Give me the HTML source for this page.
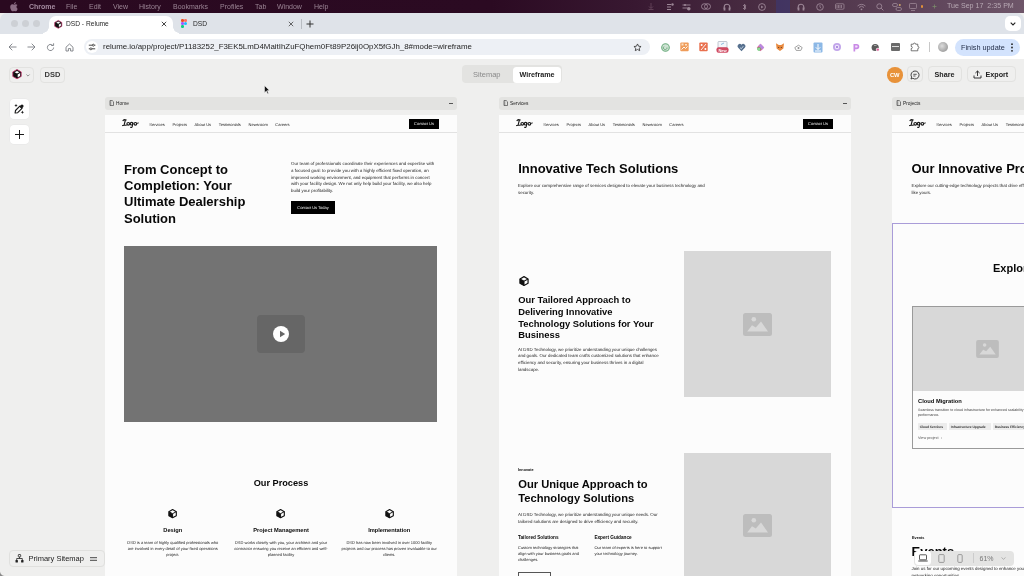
<!DOCTYPE html>
<html><head><meta charset="utf-8">
<style>
*{margin:0;padding:0;box-sizing:border-box}
html,body{width:1024px;height:576px;overflow:hidden;background:#efefee;will-change:transform;font-family:"Liberation Sans",sans-serif;color:#111}
.a{position:absolute}
svg{position:absolute;overflow:visible}
#menubar{left:0;top:0;width:1024px;height:13px;background:linear-gradient(90deg,#2a0920 0%,#2b0a22 48%,#381831 62%,#4e3348 78%,#5e445a 90%,#6e5669 100%)}
#menubar span{position:absolute;top:1px;font-size:7px;color:#9a8494;line-height:11px;white-space:nowrap}
#tabstrip{left:0;top:13px;width:1024px;height:22px;background:#dfe3e9;border-radius:7px 7px 0 0}
#toolbar{left:0;top:34px;width:1024px;height:25px;background:#fff}
#app{left:0;top:59px;width:1024px;height:517px;background:#efefee;overflow:hidden}
.tl{position:absolute;top:7px;width:7px;height:7px;border-radius:50%;background:#cdd0d5}
.tab{position:absolute;top:3px;height:19px;background:#fff;border-radius:7px 7px 0 0}
.tt{position:absolute;font-size:6.65px;color:#1f1f1f;white-space:nowrap;line-height:8px}
.ext{position:absolute;top:8px;width:9px;height:9px;border-radius:2px}
.btn{position:absolute;border:1px solid #e2e2e0;border-radius:4px;background:#efefee}
.wbtn{position:absolute;background:#fff;border-radius:4px;box-shadow:0 0 0 0.5px #e6e6e6}
.frame{position:absolute;top:39px;width:352px;height:600px}
.fh{position:absolute;left:0;top:-0.6px;width:352px;height:12.4px;background:#e3e3e1;border-radius:3px}
.fh span{position:absolute;left:11px;top:2.4px;font-size:4.8px;line-height:8px;color:#222}
.page{position:absolute;left:0;top:17px;width:352px;height:600px;background:#fcfcfc;overflow:hidden}
.nav{position:absolute;left:0;top:0;width:352px;height:17.8px;border-bottom:0.8px solid #e2e2e2}
.nl{position:absolute;top:7px;font-size:4px;line-height:5px;color:#222;white-space:nowrap;text-rendering:geometricPrecision}
.logo{position:absolute;top:4px;font-family:"Liberation Serif",serif;font-style:italic;font-weight:bold;font-size:8.2px;line-height:10px;color:#333;letter-spacing:-0.4px;transform:skewX(-8deg)}
.cbtn{position:absolute;background:#000;color:#f4f4f4;font-size:4px;line-height:10.5px;text-align:center;white-space:nowrap;text-rendering:geometricPrecision}
.h{position:absolute;font-weight:bold;color:#080808;white-space:nowrap}
.p{position:absolute;font-size:4.4px;line-height:6.6px;color:#1c1c1c;white-space:nowrap;text-rendering:geometricPrecision}
.img{position:absolute;background:#d8d8d8}
</style></head><body>
<!-- MENUBAR -->
<div id="menubar" class="a">
 <svg style="left:10px;top:2px" width="8" height="9" viewBox="0 0 16 18"><path fill="#8b6c84" d="M13 9.6c0-2.3 1.9-3.4 2-3.5-1.1-1.6-2.8-1.800-3.400-1.800-1.400-.1-2.800.9-3.500.9-.7 0-1.800-.8-3-.8C3.500 4.400 2 5.300 1.200 6.700-.5 9.600.8 14 2.400 16.300c.8 1.100 1.700 2.400 2.900 2.300 1.200 0 1.600-.7 3-.7s1.800.7 3 .7c1.300 0 2.100-1.200 2.800-2.300.9-1.300 1.300-2.600 1.300-2.600S13 12.300 13 9.600zM10.800 2.900C11.400 2.100 11.900 1 11.700 0c-.9 0-2 .6-2.700 1.400-.6.700-1.100 1.800-1 2.800 1.100.1 2.100-.5 2.800-1.300z"/></svg>
 <span style="left:29px;font-weight:bold;color:#a58ba0">Chrome</span>
 <span style="left:66px">File</span>
 <span style="left:89px">Edit</span>
 <span style="left:113px">View</span>
 <span style="left:139px">History</span>
 <span style="left:173px">Bookmarks</span>
 <span style="left:220px">Profiles</span>
 <span style="left:255px">Tab</span>
 <span style="left:277px">Window</span>
 <span style="left:314px">Help</span>
 <span style="left:947px;color:#b7a8b3;font-size:7.1px">Tue Sep 17&nbsp; 2:35 PM</span>
</div>
<div id="menuicons" class="a" style="left:0;top:0;width:1024px;height:13px">
<svg style="left:648px;top:3px" width="6" height="7" viewBox="0 0 6 7"><path d="M3 0v5M1 3.5 3 5.5 5 3.5M.5 6.5h5" stroke="#6a4a60" stroke-width=".8" fill="none"/></svg>
<svg style="left:666px;top:2.5px" width="8" height="8" viewBox="0 0 8 8"><path d="M1 1.5h4M1 4h4M1 6.5h4" stroke="#9c8696" stroke-width="1"/><circle cx="6.5" cy="1.5" r="1.2" fill="#9c8696"/></svg>
<svg style="left:682px;top:2.5px" width="9" height="8" viewBox="0 0 9 8"><path d="M.5 2h8M.5 5h5" stroke="#9c8696" stroke-width=".9"/><circle cx="3" cy="2" r="1" fill="#9c8696"/><circle cx="6.8" cy="5.8" r="1.8" fill="#9c8696"/></svg>
<svg style="left:701px;top:3px" width="10" height="7" viewBox="0 0 10 7"><ellipse cx="3.5" cy="3.5" rx="3" ry="2.8" fill="none" stroke="#9c8696" stroke-width=".9"/><ellipse cx="6.5" cy="3.5" rx="3" ry="2.8" fill="none" stroke="#9c8696" stroke-width=".9"/></svg>
<svg style="left:723px;top:2.5px" width="8" height="8" viewBox="0 0 8 8"><path d="M1.2 6V4a2.8 2.8 0 0 1 5.6 0v2" stroke="#9c8696" stroke-width="1.1" fill="none"/><rect x=".6" y="4.5" width="1.8" height="3" fill="#9c8696"/><rect x="5.6" y="4.5" width="1.8" height="3" fill="#9c8696"/></svg>
<svg style="left:742px;top:2.5px" width="5" height="8" viewBox="0 0 5 8"><path d="M1 2 4 5 2.5 6.8V1.2L4 3 1 6" stroke="#9c8696" stroke-width=".8" fill="none"/></svg>
<svg style="left:757.5px;top:2.5px" width="8" height="8" viewBox="0 0 8 8"><circle cx="4" cy="4" r="3.4" fill="none" stroke="#9c8696" stroke-width=".9"/><path d="M3.1 2.5v3L5.5 4z" fill="#9c8696"/></svg>
<div class="a" style="left:776px;top:0;width:14px;height:13px;background:#3a3878;opacity:.55"></div>
<svg style="left:797px;top:2.5px" width="8" height="8" viewBox="0 0 8 8"><path d="M1.2 6V4a2.8 2.8 0 0 1 5.6 0v2" stroke="#9c8696" stroke-width="1.1" fill="none"/><rect x=".6" y="4.5" width="1.8" height="3" fill="#9c8696"/><rect x="5.6" y="4.5" width="1.8" height="3" fill="#9c8696"/></svg>
<svg style="left:816px;top:2.5px" width="8" height="8" viewBox="0 0 8 8"><circle cx="4" cy="4" r="3.3" fill="none" stroke="#9c8696" stroke-width=".9"/><path d="M4 2v2.2l1.3 1" stroke="#9c8696" stroke-width=".8" fill="none"/></svg>
<svg style="left:835px;top:3px" width="10" height="7" viewBox="0 0 10 7"><rect x=".5" y=".8" width="8.5" height="5.4" rx="1" fill="none" stroke="#9c8696" stroke-width=".8"/><path d="M2 2v3M3.5 2v3M5 2v3M6.5 2v3" stroke="#9c8696" stroke-width=".8"/></svg>
<svg style="left:856.5px;top:2.5px" width="9" height="8" viewBox="0 0 9 8"><path d="M.6 3a5.5 5.5 0 0 1 7.8 0M2 4.5a3.5 3.5 0 0 1 5 0" stroke="#9c8696" stroke-width=".9" fill="none"/><circle cx="4.5" cy="6.3" r=".9" fill="#9c8696"/></svg>
<svg style="left:876px;top:2.5px" width="8" height="8" viewBox="0 0 8 8"><circle cx="3.3" cy="3.3" r="2.5" fill="none" stroke="#9c8696" stroke-width=".9"/><path d="M5.2 5.2 7.4 7.4" stroke="#9c8696" stroke-width="1"/></svg>
<svg style="left:892px;top:2.5px" width="10" height="8" viewBox="0 0 10 8"><rect x=".5" y=".5" width="5" height="3" rx="1.5" fill="none" stroke="#9c8696" stroke-width=".8"/><rect x="4" y="4.5" width="5.5" height="3" rx="1.5" fill="none" stroke="#9c8696" stroke-width=".8"/><circle cx="7.8" cy="2" r="1" fill="#c9a56a"/></svg>
<svg style="left:909px;top:2.5px" width="8" height="8" viewBox="0 0 8 8"><rect x=".5" y=".5" width="7" height="5" rx=".8" fill="none" stroke="#9c8696" stroke-width=".8"/><path d="M2 7.5h4" stroke="#9c8696" stroke-width=".8"/></svg>
<div class="a" style="left:921px;top:5px;width:2px;height:2.5px;background:#e0903a;border-radius:1px"></div>
<svg style="left:932px;top:4px" width="5" height="5" viewBox="0 0 5 5"><path d="M.5 2.5h4M2.5 .5v4" stroke="#7a8a6a" stroke-width=".8"/></svg>
</div>

<!-- TAB STRIP -->
<div id="tabstrip" class="a">
 <div class="tl" style="left:10.5px"></div>
 <div class="tl" style="left:21.5px"></div>
 <div class="tl" style="left:32.5px"></div>
 <div class="tab" style="left:49px;width:124px"></div><div class="a" style="left:43px;top:14px;width:6px;height:8px;background:radial-gradient(circle at 0 0,#dfe3e9 5.5px,#fff 6px)"></div><div class="a" style="left:173px;top:14px;width:6px;height:8px;background:radial-gradient(circle at 100% 0,#dfe3e9 5.5px,#fff 6px)"></div>
</div>
<!-- tabs content (body coords) -->
<svg style="left:53.5px;top:19.5px" width="8.5" height="8.5" viewBox="0 0 10 10"><path d="M5 .5 9.2 2.9V7.4L5 9.8.8 7.4V2.9z" fill="#111" stroke="#c4306a" stroke-width=".8"/><path d="M5 1.9 7.4 3.2 5 4.5 2.6 3.2z" fill="#fff"/><path d="M5.7 5.4 8.1 4v2.9L5.7 8.3z" fill="#fff"/></svg>
<div class="tt a" style="left:66px;top:20px">DSD - Relume</div>
<svg style="left:161px;top:21px" width="6" height="6" viewBox="0 0 6 6"><path d="M.8.8l4.4 4.4M5.2.8.8 5.2" stroke="#333" stroke-width=".9"/></svg>
<svg style="left:180px;top:19px" width="8" height="10" viewBox="0 0 8 10"><rect x="1" y="0" width="3" height="3" rx="1.2" fill="#f24e1e"/><rect x="4" y="0" width="3" height="3" rx="1.2" fill="#ff7262"/><rect x="1" y="3" width="3" height="3" rx="1.2" fill="#a259ff"/><circle cx="5.5" cy="4.5" r="1.5" fill="#1abcfe"/><rect x="1" y="6" width="3" height="3" rx="1.2" fill="#0acf83"/></svg>
<div class="tt a" style="left:193px;top:20px">DSD</div>
<svg style="left:288px;top:21px" width="6" height="6" viewBox="0 0 6 6"><path d="M.8.8l4.4 4.4M5.2.8.8 5.2" stroke="#444" stroke-width=".8"/></svg>
<div class="a" style="left:301px;top:19px;width:1px;height:10px;background:#b8bcc2"></div>
<svg style="left:306px;top:20px" width="8" height="8" viewBox="0 0 8 8"><path d="M4 .5v7M.5 4h7" stroke="#333" stroke-width="1"/></svg>
<div class="a" style="left:1005px;top:16px;width:16px;height:15px;background:#fff;border-radius:5px"></div>
<svg style="left:1010px;top:22px" width="6" height="4" viewBox="0 0 6 4"><path d="M.7.7 3 3 5.3.7" stroke="#222" stroke-width="1.1" fill="none"/></svg>

<div id="toolbar" class="a">
 <svg style="left:8px;top:9px" width="9" height="8" viewBox="0 0 9 8"><path d="M8.5 4H1M4.3.7 1 4l3.3 3.3" stroke="#7b7e83" stroke-width=".9" fill="none"/></svg>
 <svg style="left:27px;top:9px" width="9" height="8" viewBox="0 0 9 8"><path d="M.5 4H8M4.7.7 8 4 4.7 7.3" stroke="#7b7e83" stroke-width=".9" fill="none"/></svg>
 <svg style="left:46px;top:8.5px" width="9" height="9" viewBox="0 0 9 9"><path d="M7.6 4.5A3.1 3.1 0 1 1 6.6 2.2" stroke="#7b7e83" stroke-width=".9" fill="none"/><path d="M5.2 1.6h2.4V-.6" stroke="#7b7e83" stroke-width=".9" fill="none" transform="translate(0 .9)"/></svg>
 <svg style="left:65px;top:8.5px" width="9" height="9" viewBox="0 0 9 9"><path d="M1 4.2 4.5 1 8 4.2V8H5.6V5.6H3.4V8H1z" stroke="#7b7e83" stroke-width=".9" fill="none" stroke-linejoin="round"/></svg>
 <div class="a" style="left:84px;top:4.5px;width:566px;height:16.5px;background:#edf0f5;border-radius:8.5px"></div>
 <div class="a" style="left:85.5px;top:6.5px;width:12.5px;height:12.5px;background:#fff;border-radius:50%"></div>
 <svg style="left:87.5px;top:9px" width="8" height="8" viewBox="0 0 8 8"><path d="M.8 2.2h3.4M6.4 2.2h1M.8 5.8h1M4 5.8h3.2" stroke="#333" stroke-width=".9"/><circle cx="5.3" cy="2.2" r="1" fill="none" stroke="#333" stroke-width=".8"/><circle cx="2.9" cy="5.8" r="1" fill="none" stroke="#333" stroke-width=".8"/></svg>
 <div class="a" style="left:103px;top:8px;font-size:7.9px;line-height:10px;color:#1f1f1f;white-space:nowrap">relume.io/app/project/P1183252_F3EK5LmD4MaitIhZuFQhem0Ft89P26ij0OpX5fGJh_8#mode=wireframe</div>
 <svg style="left:633px;top:8.5px" width="9" height="9" viewBox="0 0 24 24"><path d="M12 2.5l2.9 6.1 6.6.8-4.9 4.5 1.3 6.6L12 17.2l-5.9 3.3 1.3-6.6-4.9-4.5 6.6-.8z" fill="none" stroke="#333" stroke-width="2.2" stroke-linejoin="round"/></svg>
 <!-- extensions -->
 <svg style="left:660.5px;top:8.5px" width="9" height="9" viewBox="0 0 9 9"><circle cx="4.5" cy="4.5" r="3.8" fill="#cfe3d4" stroke="#6fae80" stroke-width="1.1"/><path d="M3 3.5a1.8 1.8 0 1 0 3 1" fill="none" stroke="#5a9a6a" stroke-width=".8"/></svg>
 <svg style="left:679.5px;top:8px" width="9" height="10" viewBox="0 0 9 10"><rect x=".3" y=".5" width="8.4" height="8.8" rx="1" fill="#ef9c5a"/><rect x="1.5" y="1.5" width="2" height="2" fill="#fbe3c8"/><rect x="5" y="2" width="2" height="1.5" fill="#fbe3c8"/><path d="M1.5 7.5 4 5l1.5 1.5L7.5 4.5" stroke="#fff" stroke-width=".9" fill="none"/></svg>
 <svg style="left:698.5px;top:8px" width="9" height="10" viewBox="0 0 9 10"><rect x=".3" y=".5" width="8.4" height="8.8" rx="1" fill="#e9704e"/><path d="M2 8 7 2" stroke="#fff" stroke-width=".9"/><circle cx="2.6" cy="3" r="1" fill="#fff"/><circle cx="6.4" cy="7" r="1" fill="#fff"/></svg>
 <svg style="left:716px;top:6.5px" width="13" height="13" viewBox="0 0 13 13"><rect x="2" y=".5" width="9" height="6.5" rx=".8" fill="#f4f6fa" stroke="#9aa4b4" stroke-width=".6"/><path d="M5 3.5 8 2" stroke="#5aa0d0" stroke-width=".7"/><rect x=".5" y="6.2" width="12" height="5.6" rx="2" fill="#d04a62"/><text x="6.5" y="10.5" font-size="4" text-anchor="middle" fill="#fff" font-family="Liberation Sans" font-weight="bold">New</text></svg>
 <svg style="left:736.5px;top:8.5px" width="9" height="9" viewBox="0 0 9 9"><path d="M4.5 8.2 1 4.6A2.1 2.1 0 0 1 4.5 1.8 2.1 2.1 0 0 1 8 4.6z" fill="#56708e"/><path d="M3 4.6 4.3 5.8 6.3 3.2" stroke="#d8e4f0" stroke-width=".8" fill="none"/></svg>
 <svg style="left:755.5px;top:8.5px" width="9" height="9" viewBox="0 0 9 9"><path d="M4.5.8 8.2 4.5 4.5 8.2.8 4.5z" fill="#e06aa0"/><path d="M4.5.8 8.2 4.5 6.3 6.4 2.6 2.7z" fill="#b88ae0"/><circle cx="3" cy="6" r="1.8" fill="#4fc25a"/><circle cx="3" cy="6" r=".7" fill="#fff"/></svg>
 <svg style="left:774.5px;top:8px" width="10" height="10" viewBox="0 0 10 10"><path d="M1 1.2 3.8 3h2.4L9 1.2 8.4 6.4 5 9 1.6 6.4z" fill="#e8893e"/><path d="M3 5.5h1.2M5.8 5.5H7" stroke="#5a3a20" stroke-width=".8"/></svg>
 <svg style="left:793.5px;top:8.5px" width="9" height="9" viewBox="0 0 9 9"><path d="M.8 4.6 4.5 2.2 8.2 4.6 6.8 7.4H2.2z" fill="none" stroke="#8a8a8a" stroke-width=".8"/><circle cx="4.5" cy="5" r="1" fill="#8a8a8a"/></svg>
 <svg style="left:813px;top:7.5px" width="10" height="11" viewBox="0 0 10 11"><rect x=".5" y=".5" width="9" height="10" rx="1" fill="#8cb8e6"/><path d="M5 2v5.5M2.8 5.3 5 7.5l2.2-2.2" stroke="#fff" stroke-width="1" fill="none"/><rect x="2" y="8.5" width="6" height="1" fill="#fff"/></svg>
 <svg style="left:832px;top:8px" width="10" height="10" viewBox="0 0 10 10"><circle cx="5" cy="5" r="4" fill="#c2a6ea"/><circle cx="5" cy="5" r="2.2" fill="#efe6fb"/><circle cx="5" cy="5" r="1" fill="#9a70d8"/></svg>
 <svg style="left:851.5px;top:8.5px" width="9" height="9" viewBox="0 0 9 9"><path d="M1.5 1h3.2a2.6 2.6 0 0 1 0 5.2H3.2v2.3H1.5z" fill="#c98ae6"/><path d="M3.2 2.6h1.4a1 1 0 0 1 0 2H3.2z" fill="#f3e4fa"/></svg>
 <svg style="left:871px;top:8.5px" width="10" height="9" viewBox="0 0 10 9"><circle cx="4.2" cy="4.5" r="3.6" fill="#5a5a5a"/><path d="M3 2.5h2.5" stroke="#ddd" stroke-width=".6"/><circle cx="6.8" cy="6.6" r="1.9" fill="#f5f5f5"/><circle cx="6.8" cy="6.6" r="1.2" fill="#e35a9a"/></svg>
 <div class="ext" style="left:890.5px;top:8.5px;width:9.5px;height:8.5px;background:#6a6a6a;border-radius:1px"></div>
 <div class="a" style="left:892px;top:12px;width:6.5px;height:1.2px;background:#ddd"></div>
 <svg style="left:909.5px;top:8px" width="10" height="10" viewBox="0 0 10 10"><path d="M1.2 2.2h2.2a1.1 1.1 0 0 1 2.2 0h2.2v2.2a1.1 1.1 0 0 1 0 2.2v2.2H1.2V6.6a1.1 1.1 0 0 0 0-2.2z" fill="none" stroke="#555" stroke-width=".8" stroke-linejoin="round"/></svg>
 <div class="a" style="left:929px;top:8px;width:0.8px;height:10px;background:#c8c8c8"></div>
 <div class="a" style="left:938px;top:7.5px;width:10px;height:10px;border-radius:50%;background:radial-gradient(circle at 40% 40%,#ddd,#888)"></div>
 <div class="a" style="left:955px;top:4.5px;width:65px;height:17px;background:#d3e3fd;border-radius:8.5px"></div>
 <div class="a" style="left:961px;top:8.5px;font-size:7.3px;line-height:9px;color:#1f2a44;white-space:nowrap">Finish update</div>
 <svg style="left:1011px;top:8.5px" width="2" height="9" viewBox="0 0 2 9"><circle cx="1" cy="1.2" r=".9" fill="#222"/><circle cx="1" cy="4.5" r=".9" fill="#222"/><circle cx="1" cy="7.8" r=".9" fill="#222"/></svg>
</div>
<div id="app" class="a">
 <!-- top-left buttons (app coords: y-59) -->
 <div class="btn" style="left:9px;top:7.5px;width:25px;height:16px"></div>
 <svg style="left:11.8px;top:10.2px" width="10" height="10" viewBox="0 0 10 10"><path d="M5 .5 9.2 2.9V7.4L5 9.8.8 7.4V2.9z" fill="#111" stroke="#c4306a" stroke-width=".8"/><path d="M5 1.9 7.4 3.2 5 4.5 2.6 3.2z" fill="#fff"/><path d="M5.7 5.4 8.1 4v2.9L5.7 8.3z" fill="#fff"/></svg>
 <svg style="left:26.2px;top:14.6px" width="4" height="3" viewBox="0 0 4 3"><path d="M.4.5 2 2.1 3.6.5" stroke="#777" stroke-width=".8" fill="none"/></svg>
 <div class="btn" style="left:40px;top:7.5px;width:25px;height:16px"></div>
 <div class="a" style="left:40px;top:11px;width:25px;text-align:center;font-size:7.5px;line-height:9px;color:#3a3a3a;font-weight:bold">DSD</div>
 <!-- left tools -->
 <div class="wbtn" style="left:9.5px;top:40px;width:19.5px;height:20px"></div>
 <svg style="left:14px;top:44.6px" width="10" height="10" viewBox="0 0 10 10"><path d="M1.1 9 1.5 6.5 5.8 2.2 8 4.4 3.7 8.7z" fill="none" stroke="#1a1a1a" stroke-width="1.15" stroke-linejoin="round"/><path d="M5.5 2.5 6.9 1.1a1.55 1.55 0 0 1 2.2 2.2L7.7 4.7z" fill="#1a1a1a"/><path d="M2 -.2 2.5 1 3.7 1.5 2.5 2 2 3.2 1.5 2 .3 1.5 1.5 1z" fill="#1a1a1a"/><path d="M8.4 6.6 8.9 7.8 10.1 8.3 8.9 8.8 8.4 10 7.9 8.8 6.7 8.3 7.9 7.8z" fill="#1a1a1a"/></svg>
 <div class="wbtn" style="left:9.5px;top:65.5px;width:19.5px;height:19.5px"></div>
 <svg style="left:14.5px;top:70.9px" width="9" height="9" viewBox="0 0 9 9"><path d="M4.5 0v9M0 4.5h9" stroke="#1a1a1a" stroke-width="1"/></svg>
 <!-- segmented -->
 <div class="a" style="left:461.5px;top:6.3px;width:100.5px;height:18.2px;background:#e3e3e1;border-radius:4px"></div>
 <div class="a" style="left:512.8px;top:7.5px;width:48px;height:16px;background:#fff;border-radius:3.5px"></div>
 <div class="a" style="left:473px;top:11px;font-size:7.5px;line-height:9px;color:#8a8a8a;white-space:nowrap">Sitemap</div>
 <div class="a" style="left:519.5px;top:11px;font-size:7.2px;line-height:9px;color:#222;font-weight:bold;white-space:nowrap">Wireframe</div>
 <!-- right -->
 <div class="a" style="left:887px;top:8px;width:15.5px;height:15.5px;border-radius:50%;background:#e8923a"></div>
 <div class="a" style="left:887px;top:12px;width:15.5px;text-align:center;font-size:5.8px;line-height:8px;color:#fff;font-weight:bold">CW</div>
 <div class="btn" style="left:906.5px;top:7.3px;width:16px;height:16.2px"></div>
 <svg style="left:909.5px;top:10.5px" width="10" height="10" viewBox="0 0 10 10"><path d="M5 1a4 4 0 1 1-2.2 7.3L1 9l.6-1.9A4 4 0 0 1 5 1z" fill="none" stroke="#333" stroke-width=".9" stroke-linejoin="round"/><path d="M3.3 4.3h3.4M3.3 6h2.2" stroke="#333" stroke-width=".8"/></svg>
 <div class="btn" style="left:927.5px;top:7.3px;width:34px;height:16.2px"></div>
 <div class="a" style="left:927.5px;top:11px;width:34px;text-align:center;font-size:7.2px;line-height:9px;color:#222;font-weight:bold">Share</div>
 <div class="btn" style="left:966.5px;top:7.3px;width:49px;height:16.2px"></div>
 <svg style="left:972.5px;top:11px" width="9" height="9" viewBox="0 0 9 9"><path d="M4.5 6V1M2.4 3 4.5 1 6.6 3M1 5.5v2.5h7V5.5" stroke="#222" stroke-width=".9" fill="none"/></svg>
 <div class="a" style="left:985.5px;top:11px;font-size:7.2px;line-height:9px;color:#222;font-weight:bold;white-space:nowrap">Export</div>
 <!-- cursor -->
 <svg style="left:264px;top:26px" width="6" height="9" viewBox="0 0 6 9"><path d="M.5.5v7.2l1.8-1.6 1.2 2.6 1-.5L3.3 5.6h2.2z" fill="#111" stroke="#fff" stroke-width=".5"/></svg>
</div>
<!-- FRAMES -->
<div class="frame" style="left:105px;top:98px">
<div class="fh"><svg style="left:4px;top:3px" width="5" height="6" viewBox="0 0 5 6"><path d="M1 .5h2.2L4.5 1.8v3.7H1z" fill="none" stroke="#333" stroke-width=".6"/><path d="M1.8 1.2v4" stroke="#333" stroke-width=".4"/></svg><span>Home</span><div class="a" style="left:343.5px;top:5.4px;width:4.5px;height:0.7px;background:#555"></div></div>
<div class="page">
<div class="nav"><svg style="left:17px;top:4.2px" width="17" height="9" viewBox="0 0 17 9"><path d="M1 1.6C1.8.6 3.2.4 4.2 1M3.4 1 2 6.3M.6 6.6C1.8 6 3.2 6.4 4.6 6" fill="none" stroke="#1a1a1a" stroke-width="1.15" stroke-linecap="round"/><circle cx="6.3" cy="4.8" r="1.35" fill="none" stroke="#1a1a1a" stroke-width="1.1"/><circle cx="9.6" cy="4.7" r="1.3" fill="none" stroke="#1a1a1a" stroke-width="1.1"/><path d="M10.9 4 10.2 7.6C10 8.6 9.2 8.7 8.6 8.3" fill="none" stroke="#1a1a1a" stroke-width="1.05" stroke-linecap="round"/><circle cx="13.4" cy="4.8" r="1.35" fill="none" stroke="#1a1a1a" stroke-width="1.1"/><path d="M14.8 4.4 16.4 4" fill="none" stroke="#1a1a1a" stroke-width=".9" stroke-linecap="round"/></svg><div class="nl" style="left:44.3px">Services</div><div class="nl" style="left:67.5px">Projects</div><div class="nl" style="left:89.6px">About Us</div><div class="nl" style="left:113.7px">Testimonials</div><div class="nl" style="left:143.6px">Newsroom</div><div class="nl" style="left:170.3px">Careers</div><div class="cbtn" style="left:304px;top:3.6px;width:30px;height:10.4px">Contact Us</div></div>
<div class="h" style="left:19px;top:46.6px;font-size:13px;line-height:16.35px">From Concept to<br>Completion: Your<br>Ultimate Dealership<br>Solution</div>
<div class="p" style="left:186px;top:46.4px">Our team of professionals coordinate their experiences and expertise with<br>a focused goal: to provide you with a highly efficient fixed operation, an<br>improved working environment, and equipment that performs in concert<br>with your facility design. We not only help build your facility, we also help<br>build your profitability.</div>
<div class="cbtn" style="left:186px;top:86px;width:44px;height:12.6px;line-height:14.6px;overflow:hidden">Contact Us Today</div>
<div class="a" style="left:19.3px;top:131px;width:313px;height:175.8px;background:#737373"></div>
<div class="a" style="left:151.7px;top:199.6px;width:48.3px;height:38px;background:#666;border-radius:4px"></div>
<div class="a" style="left:168px;top:210.5px;width:16.4px;height:16.4px;background:#fff;border-radius:50%"></div>
<svg style="left:173.5px;top:214.5px" width="7" height="8" viewBox="0 0 7 8"><path d="M1 .8 6.2 4 1 7.2z" fill="#666"/></svg>
<div class="h" style="left:0;width:352px;text-align:center;top:363.2px;font-size:9.2px;line-height:11px">Our Process</div>
<svg style="left:63.199999999999996px;top:394.4px" width="9.2" height="9.2" viewBox="0 0 10 10.6"><path d="M5 .7 9.3 3.1v4.6L5 10.0.7 7.7V3.1z" fill="#fff" stroke="#111" stroke-width="1.3" stroke-linejoin="round"/><path d=".7 3.1" /><path d="M.7 3.1 5 5.4v4.6L.7 7.7z" fill="#111"/><path d="M.7 3.1 5 5.4 9.3 3.1M5 5.4v4.6" stroke="#111" stroke-width="1.1" fill="none"/></svg><div class="h" style="left:17.799999999999997px;width:100px;text-align:center;top:411.7px;font-size:5.7px;line-height:7px">Design</div><div class="p" style="left:17.799999999999997px;width:100px;text-align:center;top:425px;font-size:4px;line-height:6px">DSD is a team of highly qualified professionals who<br>are involved in every detail of your fixed operations<br>project.</div><svg style="left:171.4px;top:394.4px" width="9.2" height="9.2" viewBox="0 0 10 10.6"><path d="M5 .7 9.3 3.1v4.6L5 10.0.7 7.7V3.1z" fill="#fff" stroke="#111" stroke-width="1.3" stroke-linejoin="round"/><path d=".7 3.1" /><path d="M.7 3.1 5 5.4v4.6L.7 7.7z" fill="#111"/><path d="M.7 3.1 5 5.4 9.3 3.1M5 5.4v4.6" stroke="#111" stroke-width="1.1" fill="none"/></svg><div class="h" style="left:126px;width:100px;text-align:center;top:411.7px;font-size:5.7px;line-height:7px">Project Management</div><div class="p" style="left:126px;width:100px;text-align:center;top:425px;font-size:4px;line-height:6px">DSD works closely with you, your architect and your<br>contractor ensuring you receive an efficient and well-<br>planned facility</div><svg style="left:279.59999999999997px;top:394.4px" width="9.2" height="9.2" viewBox="0 0 10 10.6"><path d="M5 .7 9.3 3.1v4.6L5 10.0.7 7.7V3.1z" fill="#fff" stroke="#111" stroke-width="1.3" stroke-linejoin="round"/><path d=".7 3.1" /><path d="M.7 3.1 5 5.4v4.6L.7 7.7z" fill="#111"/><path d="M.7 3.1 5 5.4 9.3 3.1M5 5.4v4.6" stroke="#111" stroke-width="1.1" fill="none"/></svg><div class="h" style="left:234.2px;width:100px;text-align:center;top:411.7px;font-size:5.7px;line-height:7px">Implementation</div><div class="p" style="left:234.2px;width:100px;text-align:center;top:425px;font-size:4px;line-height:6px">DSD has now been involved in over 1000 facility<br>projects and our process has proven invaluable to our<br>clients.</div></div></div><div class="frame" style="left:499px;top:98px">
<div class="fh"><svg style="left:4px;top:3px" width="5" height="6" viewBox="0 0 5 6"><path d="M1 .5h2.2L4.5 1.8v3.7H1z" fill="none" stroke="#333" stroke-width=".6"/><path d="M1.8 1.2v4" stroke="#333" stroke-width=".4"/></svg><span>Services</span><div class="a" style="left:343.5px;top:5.4px;width:4.5px;height:0.7px;background:#555"></div></div>
<div class="page">
<div class="nav"><svg style="left:17px;top:4.2px" width="17" height="9" viewBox="0 0 17 9"><path d="M1 1.6C1.8.6 3.2.4 4.2 1M3.4 1 2 6.3M.6 6.6C1.8 6 3.2 6.4 4.6 6" fill="none" stroke="#1a1a1a" stroke-width="1.15" stroke-linecap="round"/><circle cx="6.3" cy="4.8" r="1.35" fill="none" stroke="#1a1a1a" stroke-width="1.1"/><circle cx="9.6" cy="4.7" r="1.3" fill="none" stroke="#1a1a1a" stroke-width="1.1"/><path d="M10.9 4 10.2 7.6C10 8.6 9.2 8.7 8.6 8.3" fill="none" stroke="#1a1a1a" stroke-width="1.05" stroke-linecap="round"/><circle cx="13.4" cy="4.8" r="1.35" fill="none" stroke="#1a1a1a" stroke-width="1.1"/><path d="M14.8 4.4 16.4 4" fill="none" stroke="#1a1a1a" stroke-width=".9" stroke-linecap="round"/></svg><div class="nl" style="left:44.3px">Services</div><div class="nl" style="left:67.5px">Projects</div><div class="nl" style="left:89.6px">About Us</div><div class="nl" style="left:113.7px">Testimonials</div><div class="nl" style="left:143.6px">Newsroom</div><div class="nl" style="left:170.3px">Careers</div><div class="cbtn" style="left:304px;top:3.6px;width:30px;height:10.4px">Contact Us</div></div>
<div class="h" style="left:19.2px;top:46.4px;font-size:13px;line-height:16.1px">Innovative Tech Solutions</div>
<div class="p" style="left:19px;top:68.3px">Explore our comprehensive range of services designed to elevate your business technology and<br>security.</div>
<svg style="left:20px;top:161px" width="10" height="10" viewBox="0 0 10 10.6"><path d="M5 .7 9.3 3.1v4.6L5 10.0.7 7.7V3.1z" fill="#fff" stroke="#111" stroke-width="1.3" stroke-linejoin="round"/><path d=".7 3.1" /><path d="M.7 3.1 5 5.4v4.6L.7 7.7z" fill="#111"/><path d="M.7 3.1 5 5.4 9.3 3.1M5 5.4v4.6" stroke="#111" stroke-width="1.1" fill="none"/></svg>
<div class="h" style="left:19.2px;top:179px;font-size:9.4px;line-height:11.8px">Our Tailored Approach to<br>Delivering Innovative<br>Technology Solutions for Your<br>Business</div>
<div class="p" style="left:19px;top:231.5px;line-height:6.7px">At DSD Technology, we prioritize understanding your unique challenges<br>and goals. Our dedicated team crafts customized solutions that enhance<br>efficiency and security, ensuring your business thrives in a digital<br>landscape.</div>
<div class="img" style="left:185.4px;top:135.8px;width:146.3px;height:146.4px"></div>
<svg style="left:244px;top:197.5px" width="29" height="23" viewBox="0 0 29 23"><rect x="0" y="0" width="29" height="23" rx="2.5" fill="#bdbdbd"/><circle cx="10.8" cy="6.3" r="2.3" fill="#d8d8d8"/><path d="M4.2 18.4 9 12.3 12.8 14.4 18 8.6 25 18.4z" fill="#d8d8d8"/></svg>
<div class="h" style="left:19px;top:353.3px;font-size:3.8px;line-height:5px">Innovate</div>
<div class="h" style="left:19.2px;top:362.8px;font-size:11.2px;line-height:13.8px">Our Unique Approach to<br>Technology Solutions</div>
<div class="p" style="left:19px;top:397px">At DSD Technology, we prioritize understanding your unique needs. Our<br>tailored solutions are designed to drive efficiency and security.</div>
<div class="h" style="left:19px;top:420px;font-size:4.7px;line-height:6px">Tailored Solutions</div>
<div class="h" style="left:95.4px;top:420px;font-size:4.7px;line-height:6px">Expert Guidance</div>
<div class="p" style="left:19px;top:430px;font-size:4px;line-height:5.8px">Custom technology strategies that<br>align with your business goals and<br>challenges.</div>
<div class="p" style="left:95.4px;top:430px;font-size:4px;line-height:5.8px">Our team of experts is here to support<br>your technology journey.</div>
<div class="a" style="left:19px;top:456.6px;width:32.5px;height:12px;border:0.7px solid #555"></div>
<div class="img" style="left:185.4px;top:337.5px;width:146.3px;height:146.4px"></div>
<svg style="left:244px;top:399px" width="29" height="23" viewBox="0 0 29 23"><rect x="0" y="0" width="29" height="23" rx="2.5" fill="#bdbdbd"/><circle cx="10.8" cy="6.3" r="2.3" fill="#d8d8d8"/><path d="M4.2 18.4 9 12.3 12.8 14.4 18 8.6 25 18.4z" fill="#d8d8d8"/></svg>
</div></div><div class="frame" style="left:892px;top:98px">
<div class="fh"><svg style="left:4px;top:3px" width="5" height="6" viewBox="0 0 5 6"><path d="M1 .5h2.2L4.5 1.8v3.7H1z" fill="none" stroke="#333" stroke-width=".6"/><path d="M1.8 1.2v4" stroke="#333" stroke-width=".4"/></svg><span>Projects</span><div class="a" style="left:343.5px;top:5.4px;width:4.5px;height:0.7px;background:#555"></div></div>
<div class="page">
<div class="nav"><svg style="left:17px;top:4.2px" width="17" height="9" viewBox="0 0 17 9"><path d="M1 1.6C1.8.6 3.2.4 4.2 1M3.4 1 2 6.3M.6 6.6C1.8 6 3.2 6.4 4.6 6" fill="none" stroke="#1a1a1a" stroke-width="1.15" stroke-linecap="round"/><circle cx="6.3" cy="4.8" r="1.35" fill="none" stroke="#1a1a1a" stroke-width="1.1"/><circle cx="9.6" cy="4.7" r="1.3" fill="none" stroke="#1a1a1a" stroke-width="1.1"/><path d="M10.9 4 10.2 7.6C10 8.6 9.2 8.7 8.6 8.3" fill="none" stroke="#1a1a1a" stroke-width="1.05" stroke-linecap="round"/><circle cx="13.4" cy="4.8" r="1.35" fill="none" stroke="#1a1a1a" stroke-width="1.1"/><path d="M14.8 4.4 16.4 4" fill="none" stroke="#1a1a1a" stroke-width=".9" stroke-linecap="round"/></svg><div class="nl" style="left:44.3px">Services</div><div class="nl" style="left:67.5px">Projects</div><div class="nl" style="left:89.6px">About Us</div><div class="nl" style="left:113.7px">Testimonials</div><div class="nl" style="left:143.6px">Newsroom</div><div class="nl" style="left:170.3px">Careers</div><div class="cbtn" style="left:304px;top:3.6px;width:30px;height:10.4px">Contact Us</div></div>
<div class="h" style="left:19.5px;top:46.4px;font-size:13px;line-height:16.1px">Our Innovative Projects</div>
<div class="p" style="left:19.5px;top:68.3px">Explore our cutting-edge technology projects that drive efficiency and security for businesses<br>like yours.</div>
<div class="a" style="left:0;top:107.5px;width:400px;height:285px;border:1px solid #a99cd8"></div>
<div class="h" style="left:101px;top:147px;font-size:11px;line-height:13px">Explore Our Projects</div>
<div class="a" style="left:20px;top:191px;width:200px;height:142.5px;border:0.7px solid #9a9a9a;background:#fcfcfc"></div>
<div class="img" style="left:20.5px;top:191.5px;width:200px;height:84px"></div>
<svg style="left:84px;top:224.5px" width="23" height="18" viewBox="0 0 29 23"><rect x="0" y="0" width="29" height="23" rx="2.5" fill="#bdbdbd"/><circle cx="10.8" cy="6.3" r="2.3" fill="#d8d8d8"/><path d="M4.2 18.4 9 12.3 12.8 14.4 18 8.6 25 18.4z" fill="#d8d8d8"/></svg>
<div class="h" style="left:26px;top:283px;font-size:5.75px;line-height:7px">Cloud Migration</div>
<div class="p" style="left:26px;top:292.5px;font-size:3.6px;line-height:5.9px;color:#444">Seamless transition to cloud infrastructure for enhanced scalability and<br>performance.</div>
<div class="a" style="left:26px;top:308.4px;width:28.5px;height:6.4px;background:#ececec;border-radius:.5px"></div>
<div class="a" style="left:57px;top:308.4px;width:41.5px;height:6.4px;background:#ececec;border-radius:.5px"></div>
<div class="a" style="left:101px;top:308.4px;width:45px;height:6.4px;background:#ececec;border-radius:.5px"></div>
<div class="p" style="left:27.8px;top:308.6px;font-size:3.3px;line-height:6px;color:#333;font-weight:bold;letter-spacing:-0.05px">Cloud Services</div>
<div class="p" style="left:58.8px;top:308.6px;font-size:3.3px;line-height:6px;color:#333;font-weight:bold;letter-spacing:-0.05px">Infrastructure Upgrade</div>
<div class="p" style="left:102.8px;top:308.6px;font-size:3.3px;line-height:6px;color:#333;font-weight:bold;letter-spacing:-0.05px">Business Efficiency</div>
<div class="p" style="left:26px;top:321px;font-size:3.8px;line-height:5px;color:#555">View project &nbsp;&#8250;</div>
<div class="h" style="left:20px;top:420.8px;font-size:3.8px;line-height:5px">Events</div>
<div class="h" style="left:19.5px;top:429px;font-size:13px;line-height:16px">Events</div>
<div class="p" style="left:19.5px;top:451px">Join us for our upcoming events designed to enhance your skills and<br>networking opportunities.</div>
</div></div>
<!-- /FRAMES -->
<!-- bottom UI -->
<div id="bottomui">
 <div class="a" style="left:0;top:571px;width:5px;height:5px;background:radial-gradient(circle at 100% 0,rgba(0,0,0,0) 4.5px,#8a8a8a 5.5px)"></div>
 <div class="a" style="left:8.6px;top:550.2px;width:96px;height:17.2px;background:#efefee;border:0.8px solid #e0e0de;border-radius:4px"></div>
 <svg style="left:15px;top:554px" width="9" height="9" viewBox="0 0 9 9"><rect x="3.3" y=".5" width="2.4" height="2.4" rx=".5" fill="none" stroke="#222" stroke-width=".8"/><rect x=".5" y="6" width="2.4" height="2.4" rx=".5" fill="#222"/><rect x="6.1" y="6" width="2.4" height="2.4" rx=".5" fill="#222"/><path d="M4.5 2.9v1.6M1.7 6V4.5h5.6V6" fill="none" stroke="#222" stroke-width=".8"/></svg>
 <div class="a" style="left:28.5px;top:554px;font-size:7.5px;line-height:9px;color:#222;white-space:nowrap">Primary Sitemap</div>
 <svg style="left:89.5px;top:556.5px" width="7" height="4" viewBox="0 0 7 4"><path d="M0 .7h7M0 3.3h7" stroke="#333" stroke-width=".9"/></svg>
 <!-- view controls -->
 <div class="a" style="left:914px;top:550.6px;width:100.4px;height:15.1px;background:#e4e4e3;border-radius:4px"></div>
 <div class="a" style="left:914.5px;top:551px;width:16.5px;height:14.3px;background:#fff;border-radius:3.5px"></div>
 <svg style="left:918px;top:554px" width="10" height="8" viewBox="0 0 10 8"><rect x="1.5" y=".8" width="7" height="5" rx=".6" fill="none" stroke="#333" stroke-width=".8"/><path d="M.3 7h9.4" stroke="#333" stroke-width=".9"/></svg>
 <svg style="left:937.5px;top:553.5px" width="7" height="9" viewBox="0 0 7 9"><rect x=".8" y=".6" width="5.4" height="7.8" rx=".8" fill="none" stroke="#888" stroke-width=".8"/></svg>
 <svg style="left:956.5px;top:553.5px" width="6" height="9" viewBox="0 0 6 9"><rect x=".8" y=".6" width="4.4" height="7.8" rx="1" fill="none" stroke="#888" stroke-width=".8"/></svg>
 <div class="a" style="left:972.5px;top:553px;width:0.6px;height:10px;background:#ccc"></div>
 <div class="a" style="left:979.5px;top:554px;font-size:7px;line-height:9px;color:#777;white-space:nowrap">61%</div>
 <svg style="left:1001px;top:557px" width="5" height="3" viewBox="0 0 5 3"><path d="M.5.5 2.5 2.3 4.5.5" stroke="#999" stroke-width=".7" fill="none"/></svg>
</div>
</body></html>
